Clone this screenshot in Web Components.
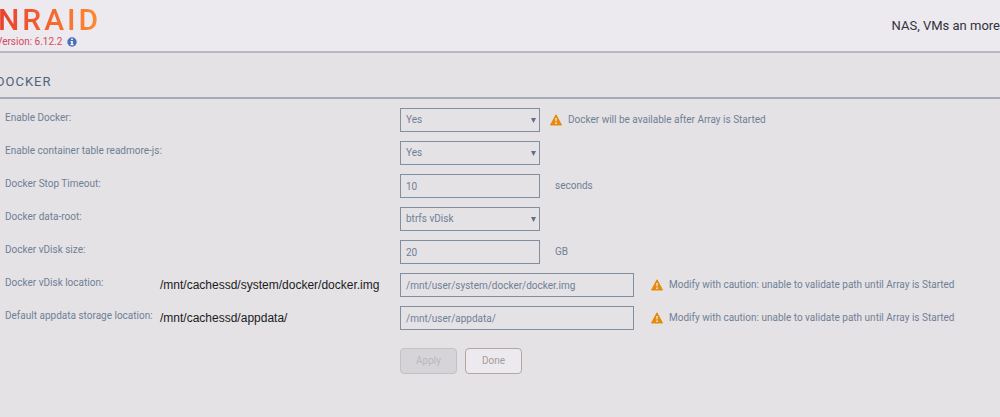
<!DOCTYPE html>
<html lang="en">
<head>
<meta charset="utf-8">
<title>Docker settings</title>
<style>
:root {
  --ink: #6f8096;
  --line: #808fa2;
  --page: #e4e2e5;
  --panel: #ece9ef;
}
body {
  margin: 0;
  min-height: 100vh;
  overflow-x: hidden;
  background: var(--page);
  color: var(--ink);
  font: 10px/16px Roboto, sans-serif;
}
</style>
</head>
<body>
<nas-header version="Version: 6.12.2">NAS, VMs an more</nas-header>
<nas-title>DOCKER</nas-title>
<nas-form>
  <nas-field label="Enable Docker:" options="Yes,No"><nas-warning>Docker will be available after Array is Started</nas-warning></nas-field>
  <nas-field label="Enable container table readmore-js:" options="Yes,No"></nas-field>
  <nas-field label="Docker Stop Timeout:" value="10"><nas-unit>seconds</nas-unit></nas-field>
  <nas-field label="Docker data-root:" options="btrfs vDisk,xfs vDisk,directory"></nas-field>
  <nas-field label="Docker vDisk size:" value="20"><nas-unit>GB</nas-unit></nas-field>
  <nas-field wide label="Docker vDisk location:" value="/mnt/user/system/docker/docker.img"><span slot="memo">/mnt/cachessd/system/docker/docker.img</span><nas-warning>Modify with caution: unable to validate path until Array is Started</nas-warning></nas-field>
  <nas-field wide label="Default appdata storage location:" value="/mnt/user/appdata/"><span slot="memo">/mnt/cachessd/appdata/</span><nas-warning>Modify with caution: unable to validate path until Array is Started</nas-warning></nas-field>
  <nas-actions></nas-actions>
</nas-form>
<script>
function define(name, html, setup) {
  customElements.define(name, class extends HTMLElement {
    constructor() {
      super();
      this.attachShadow({ mode: "open" }).innerHTML = html;
    }
    connectedCallback() {
      if (setup) setup(this, this.shadowRoot);
    }
  });
}

define("nas-header", `
<style>
:host { display: flex; align-items: center; justify-content: space-between; height: 51px; background: var(--panel); border-bottom: 2px solid #b9b8c0; box-sizing: content-box; }
.logo { width: max-content; font: 500 30px/32px Roboto, sans-serif; letter-spacing: 3px; background: linear-gradient(90deg, #e8402e, #ff8c2f); -webkit-background-clip: text; background-clip: text; color: transparent; margin-left: -2px; }
.version { display: flex; align-items: center; gap: 5px; color: #d8475a; margin-left: -4px; line-height: 12px; }
svg { width: 10px; height: 10px; }
.tagline { font: 13px/20px Roboto, sans-serif; color: #33323a; white-space: nowrap; }
</style>
<div><div class="logo">NRAID</div>
<div class="version"><span id="v"></span><svg viewBox="0 0 10 10"><circle cx="5" cy="5" r="4.7" fill="#4a6fbd"/><path d="M4.2 1.5h1.6v1.4H4.2zM3.6 4h2.2v3h.7v1.2H3.5V7h.7V5.2h-.6z" fill="#fff"/></svg></div></div>
<div class="tagline"><slot></slot></div>`,
(el, root) => { root.getElementById("v").textContent = el.getAttribute("version"); });

define("nas-title", `
<style>
:host { display: block; padding: 19px 0 5px; border-bottom: 2px solid #a4abb7; }
h1 { margin: 0 0 0 -4px; font: 13px/20px Roboto, sans-serif; letter-spacing: 1px; color: #4f6480; }
</style>
<h1><slot></slot></h1>`);

define("nas-form", `
<style>
form { display: grid; gap: 9px; padding-top: 9px; }
</style>
<form><slot></slot></form>`);

define("nas-field", `
<style>
:host { display: grid; grid-template-columns: 40% 1fr; }
.name { display: grid; grid-template-columns: 155px 1fr; padding-left: 5px; }
label { line-height: 20px; white-space: nowrap; }
.memo { font: 12px/24px "Liberation Sans", sans-serif; color: #1b1b1d; white-space: nowrap; }
.control { display: flex; align-items: center; }
input, select { box-sizing: border-box; width: 140px; height: 24px; margin: 0; padding: 0 5px; border: 1px solid var(--line); border-radius: 0; outline: 0; background: transparent; color: inherit; font: inherit; appearance: none; }
select { background: url("data:image/svg+xml,%3Csvg xmlns='http://www.w3.org/2000/svg' viewBox='0 0 5 5'%3E%3Cpath d='M0 0h5L2.500 5z' fill='%23606f85'/%3E%3C/svg%3E") right 3px center / 5px 5px no-repeat; }
:host([wide]) input { width: 234px; }
</style>
<div class="name"><label for="c"></label><div class="memo"><slot name="memo"></slot></div></div>
<div class="control"><span id="box"></span><slot></slot></div>`,
(el, root) => {
  root.querySelector("label").textContent = el.getAttribute("label");
  const options = el.getAttribute("options");
  const control = document.createElement(options ? "select" : "input");
  control.id = "c";
  if (options) {
    for (const text of options.split(",")) control.add(new Option(text));
  } else {
    control.type = "text";
    control.value = el.getAttribute("value");
  }
  root.getElementById("box").replaceWith(control);
});

define("nas-unit", `
<style>:host { display: block; padding-left: 15px; }</style><slot></slot>`);

define("nas-warning", `
<style>
:host { display: flex; align-items: center; gap: 6px; padding-left: 10px; white-space: nowrap; }
:host-context([wide]) { padding-left: 17px; }
svg { width: 12px; height: 12px; flex: none; }
</style>
<svg viewBox="0 0 12 12"><path d="M6 .8 11.500 11H.5z" fill="#e68a0c" stroke="#e68a0c" stroke-linejoin="round"/><path d="M5.200 4h1.600l-.3 3.600h-1zM5.200 8.400h1.600V10H5.200z" fill="#f4e9dc"/></svg>
<span><slot></slot></span>`);

define("nas-actions", `
<style>
:host { display: flex; gap: 8px; padding: 9px 0 0 40%; }
button { box-sizing: border-box; width: 57px; height: 26px; padding: 0; border: 1px solid #b3a79f; border-radius: 4px; background: var(--panel); color: #a69c98; font: inherit; }
button:disabled { background: #d6d4d9; border-color: #c3c1c4; color: #b9b7bb; }
</style>
<button type="button" disabled>Apply</button><button type="button">Done</button>`);
</script>
</body>
</html>
